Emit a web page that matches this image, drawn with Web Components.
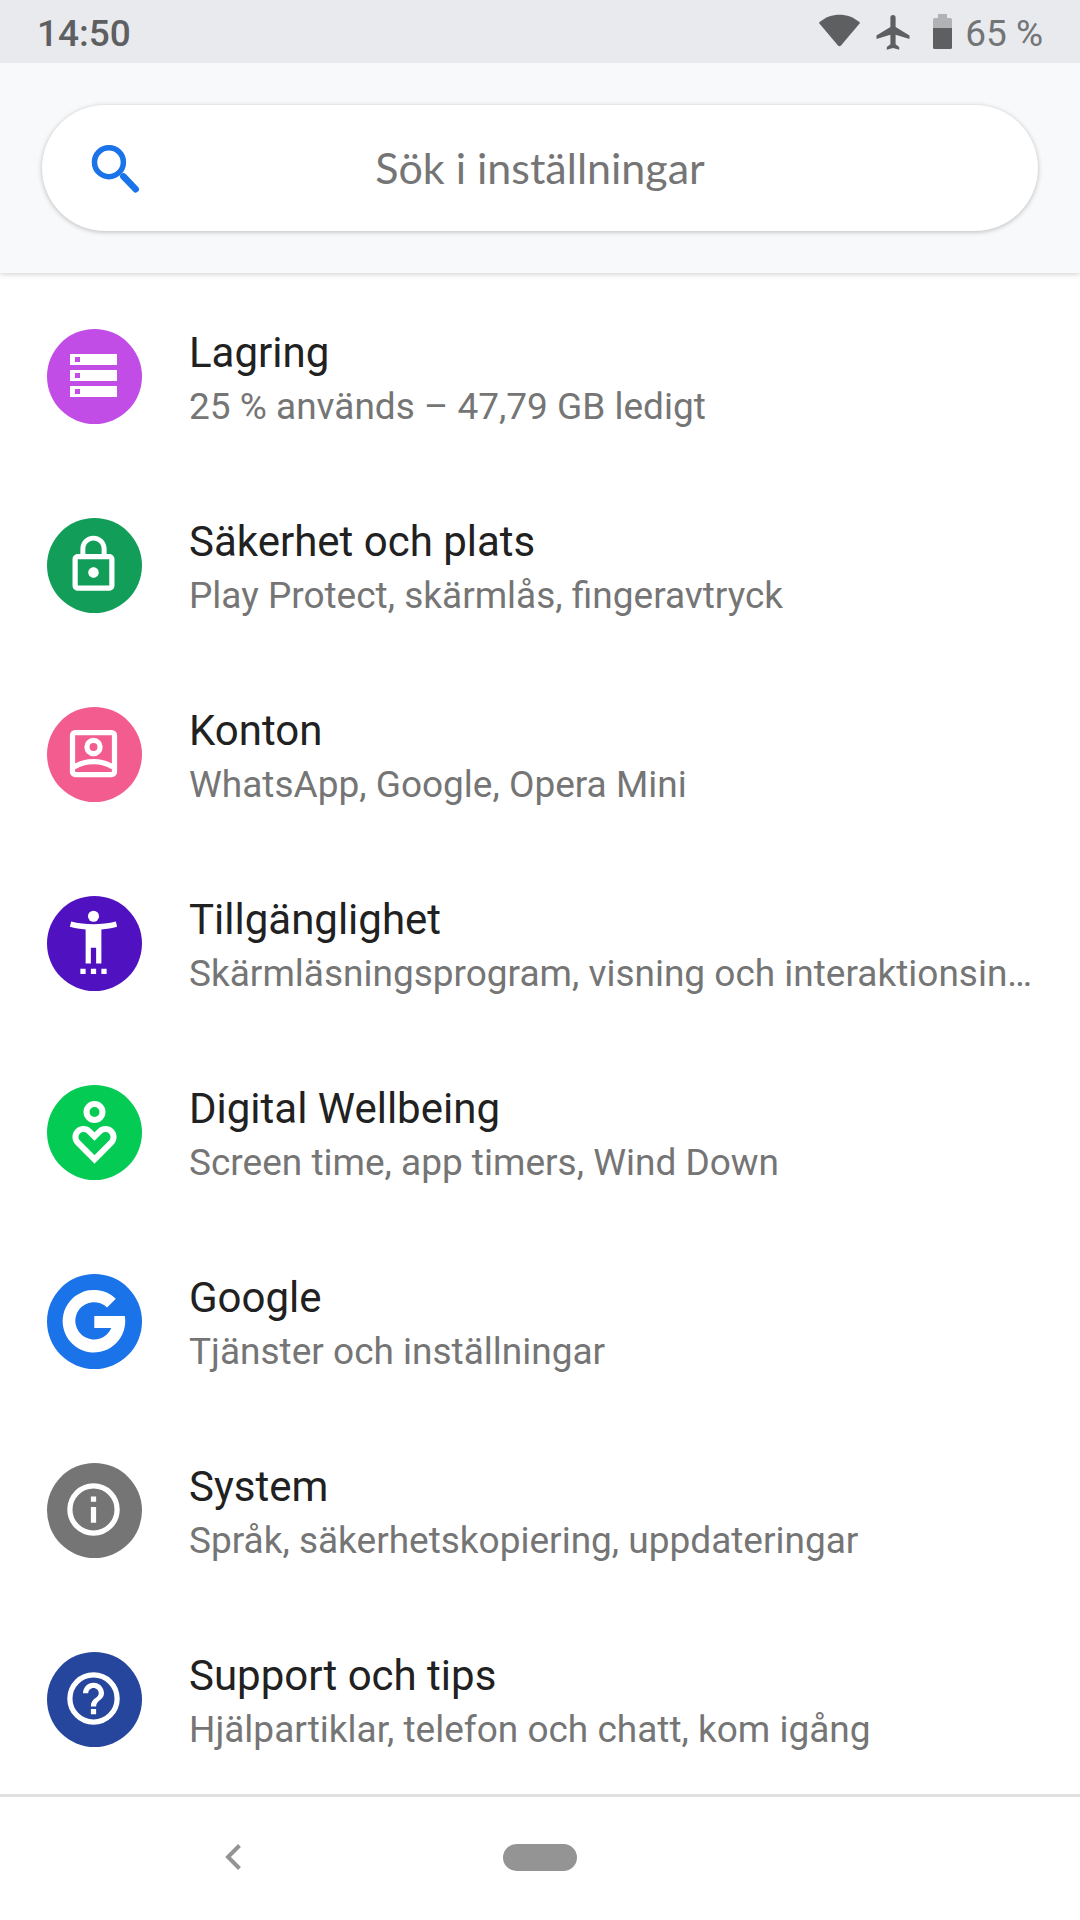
<!DOCTYPE html>
<html lang="sv">
<head>
<meta charset="utf-8">
<meta name="viewport" content="width=device-width, initial-scale=1">
<title>Inställningar</title>
<style>
    body {
        margin: 0;
        background: #fff;
        color: #212121;
        font-family: Roboto, "Noto Sans", sans-serif;
    }
</style>
</head>
<body>
<settings-app>
    <status-bar slot="status" time="14:50" battery="65"></status-bar>
    <search-header slot="header" placeholder="Sök i inställningar"></search-header>

    <settings-item icon="storage" color="#c14ce6">
        Lagring
        <span slot="summary">25 % används – 47,79 GB ledigt</span>
    </settings-item>
    <settings-item icon="lock" color="#129e59">
        Säkerhet och plats
        <span slot="summary">Play Protect, skärmlås, fingeravtryck</span>
    </settings-item>
    <settings-item icon="account" color="#f25c8f">
        Konton
        <span slot="summary">WhatsApp, Google, Opera Mini</span>
    </settings-item>
    <settings-item icon="accessibility" color="#5011c1">
        Tillgänglighet
        <span slot="summary">Skärmläsningsprogram, visning och interaktionsin…</span>
    </settings-item>
    <settings-item icon="wellbeing" color="#04cb54">
        Digital Wellbeing
        <span slot="summary">Screen time, app timers, Wind Down</span>
    </settings-item>
    <settings-item icon="google" color="#1a73e8">
        Google
        <span slot="summary">Tjänster och inställningar</span>
    </settings-item>
    <settings-item icon="info" color="#757575">
        System
        <span slot="summary">Språk, säkerhetskopiering, uppdateringar</span>
    </settings-item>
    <settings-item icon="help" color="#26459c">
        Support och tips
        <span slot="summary">Hjälpartiklar, telefon och chatt, kom igång</span>
    </settings-item>

    <nav-bar slot="nav"></nav-bar>
</settings-app>

<script>
// 24-unit glyphs, placed inside the 95px icon circle
const glyph = (shapes) => `<g transform="translate(15 15) scale(2.625)">${shapes}</g>`;

const ICONS = {
    storage: `
        <path fill-rule="evenodd" d="M23 25h47v11H23zM28 28v5h5v-5zM23 41h47v11H23zM28 44v5h5v-5zM23 57h47v11H23zM28 60v5h5v-5z"/>`,
    lock: glyph(`
        <path d="M12 17c1.1 0 2-.9 2-2s-.9-2-2-2-2 .9-2 2 .9 2 2 2zm6-9h-1V6c0-2.76-2.24-5-5-5S7 3.24 7 6v2H6c-1.1 0-2 .9-2 2v10c0 1.1.9 2 2 2h12c1.1 0 2-.9 2-2V10c0-1.1-.9-2-2-2zM8.9 6c0-1.71 1.39-3.1 3.1-3.1s3.1 1.39 3.1 3.1v2H8.9V6zM18 20H6V10h12v10z"/>`),
    account: glyph(`
        <g fill="none" stroke="#fff" stroke-width="2">
            <rect x="4" y="4" width="16" height="16" rx="1"/>
            <circle cx="12" cy="9.5" r="2.5"/>
            <path d="M4.6 17.2C6.8 15.8 9.3 15.1 12 15.1s5.2.7 7.4 2.1"/>
        </g>`),
    accessibility: glyph(`
        <circle cx="12" cy="2" r="2.1"/>
        <path d="M20.5 4c-2.61.7-5.67 1-8.5 1s-5.89-.3-8.5-1L3 6c1.86.5 4 .83 6 1v13h2v-6h2v6h2V7c2-.17 4.14-.5 6-1zM7 22h2v2H7zM11 22h2v2h-2zM15 22h2v2h-2z"/>`),
    wellbeing: `
        <g fill="none" stroke="#fff" stroke-width="6">
            <circle cx="47.5" cy="27" r="8"/>
            <path d="M47.5 74.4 30.8 57.7a8 8 0 0 1 11.4-11.4l5.3 5.3 5.3-5.3a8 8 0 0 1 11.4 11.4z"/>
        </g>`,
    google: `
        <path d="M68.8 24.8 60.1 33.5A18.7 18.7 0 1 0 64.3 54H47.3V42H77.8A31.3 31.3 0 1 1 68.8 24.8z"/>`,
    info: glyph(`
        <circle cx="12" cy="12" r="9" fill="none" stroke="#fff" stroke-width="2"/>
        <path d="M11 7h2v2h-2zM11 11h2v6h-2z"/>`),
    help: glyph(`
        <circle cx="12" cy="12" r="9" fill="none" stroke="#fff" stroke-width="2"/>
        <path d="M11 16h2v2h-2zM12 6c-2.21 0-4 1.79-4 4h2c0-1.1.9-2 2-2s2 .9 2 2c0 2-3 1.75-3 5h2c0-2.25 3-2.5 3-5 0-2.21-1.79-4-4-4z"/>`)
};

class SettingsApp extends HTMLElement {
    constructor() {
        super();
        this.attachShadow({ mode: "open" });
        this.shadowRoot.innerHTML = `
            <style>
                :host {
                    display: flex;
                    flex-direction: column;
                    min-height: 100vh;
                }

                main {
                    flex: 1;
                    padding-top: 9px;
                }
            </style>

            <slot name="status"></slot>
            <slot name="header"></slot>
            <main><slot></slot></main>
            <slot name="nav"></slot>
        `;
    }
}

class StatusBar extends HTMLElement {
    constructor() {
        super();
        this.attachShadow({ mode: "open" });
    }

    connectedCallback() {
        this.shadowRoot.innerHTML = `
            <style>
                /* stays above the header's shadow */
                :host {
                    position: relative;
                    z-index: 1;
                    display: flex;
                    align-items: center;
                    justify-content: space-between;
                    height: 63px;
                    padding: 0 37px;
                    background: #e8eaed;
                    color: #5e5f61;
                    font-size: 37px;
                    line-height: 63px;
                }

                time {
                    padding-top: 3px;
                    font-weight: 500;
                }

                .icons {
                    display: flex;
                    align-items: center;
                }

                svg {
                    display: block;
                    fill: #5e5f61;
                }

                .wifi { margin-right: 16px; }
                .plane { margin-right: 23px; }
                .battery { margin-right: 13px; }

                .level {
                    padding-top: 3px;
                    color: #737476;
                }
            </style>

            <time>${this.getAttribute("time")}</time>
            <div class="icons">
                <svg class="wifi" width="41" height="35" viewBox="0 0 41 35" role="img" aria-label="Wi-Fi">
                    <path d="M.6 8C12-1.8 29-1.8 40.4 8c.5.5.6 1 .2 1.5L22 31.4c-.9 1-2.1 1-3 0L.4 9.5C0 9 .1 8.5.6 8z"/>
                </svg>
                <svg class="plane" width="34" height="36" viewBox="0 0 34 36" role="img" aria-label="Flygplansläge">
                    <path d="M33.5 25v-3.5L19.6 13V3.5a2.6 2.6 0 0 0-5.2 0V13L.5 21.5V25l13.9-4.3v9.5L10.8 33v2.7L17 34l6.2 1.7V33l-3.6-2.8v-9.5z"/>
                </svg>
                <svg class="battery" width="19" height="35" viewBox="0 0 19 35" role="img" aria-label="Batteri">
                    <path fill="#b1b2b4" d="M5 0h9v4h3.5q1.5 0 1.5 1.5V14H0V5.5Q0 4 1.5 4H5z"/>
                    <path d="M0 14h19v19.5q0 1.5-1.5 1.5h-16Q0 35 0 33.5z"/>
                </svg>
                <span class="level">${this.getAttribute("battery")} %</span>
            </div>
        `;
    }
}

class SearchHeader extends HTMLElement {
    constructor() {
        super();
        this.attachShadow({ mode: "open" });
    }

    connectedCallback() {
        const text = this.getAttribute("placeholder");
        this.shadowRoot.innerHTML = `
            <style>
                :host {
                    display: block;
                    padding: 42px;
                    background: #f8f9fb;
                    box-shadow: 0 1px 6px rgba(0, 0, 0, 0.2);
                }

                label {
                    display: flex;
                    align-items: center;
                    height: 126px;
                    padding: 0 42px;
                    box-sizing: border-box;
                    border-radius: 63px;
                    background: #fff;
                    box-shadow: 0 1px 5px rgba(0, 0, 0, 0.25);
                }

                svg {
                    flex: none;
                    margin-right: -63px;
                }

                input {
                    flex: 1;
                    min-width: 0;
                    padding: 0 63px;
                    border: 0;
                    outline: 0;
                    background: none;
                    color: #212121;
                    font-family: Lato, Roboto, sans-serif;
                    font-size: 43px;
                    line-height: 56px;
                    text-align: center;
                }

                input::placeholder {
                    color: #757575;
                    opacity: 1;
                }
            </style>

            <label>
                <svg width="63" height="63" viewBox="0 0 24 24" fill="none" stroke="#1a73e8" aria-hidden="true">
                    <circle cx="9.5" cy="9.6" r="5.5" stroke-width="2.1"/>
                    <path stroke-width="2.5" stroke-linecap="round" d="M15 15l4.7 4.9"/>
                </svg>
                <input type="text" placeholder="${text}" aria-label="${text}">
            </label>
        `;
    }
}

class SettingsItem extends HTMLElement {
    constructor() {
        super();
        this.attachShadow({ mode: "open" });
    }

    connectedCallback() {
        this.shadowRoot.innerHTML = `
            <style>
                :host {
                    display: block;
                }

                a {
                    display: flex;
                    align-items: center;
                    gap: 47px;
                    height: 189px;
                    padding: 0 42px 0 47px;
                    box-sizing: border-box;
                    color: inherit;
                    text-decoration: none;
                }

                svg {
                    flex: none;
                    border-radius: 50%;
                    background: ${this.getAttribute("color")};
                    fill: #fff;
                }

                .text {
                    flex: 1;
                    min-width: 0;
                }

                .title, .summary {
                    overflow: hidden;
                    white-space: nowrap;
                    text-overflow: ellipsis;
                }

                .title {
                    font-size: 42px;
                    line-height: 60px;
                }

                .summary {
                    color: #757575;
                    font-size: 37px;
                    line-height: 48px;
                }
            </style>

            <a href="#${this.getAttribute("icon")}">
                <svg width="95" height="95" viewBox="0 0 95 95" aria-hidden="true">${ICONS[this.getAttribute("icon")]}</svg>
                <div class="text">
                    <div class="title"><slot></slot></div>
                    <div class="summary"><slot name="summary"></slot></div>
                </div>
            </a>
        `;
    }
}

class NavBar extends HTMLElement {
    constructor() {
        super();
        this.attachShadow({ mode: "open" });
        this.shadowRoot.innerHTML = `
            <style>
                :host {
                    display: grid;
                    grid-template-columns: repeat(3, 1fr);
                    height: 126px;
                    padding: 0 80px;
                    background: #fff;
                    box-shadow: inset 0 3px #e0e0e0;
                }

                button {
                    display: flex;
                    align-items: center;
                    justify-content: center;
                    padding: 0;
                    border: 0;
                    background: none;
                }

                .pill {
                    width: 74px;
                    height: 27px;
                    border-radius: 14px;
                    background: #949494;
                }
            </style>

            <button type="button" aria-label="Tillbaka">
                <svg width="16" height="26" viewBox="0 0 16 26" fill="none" stroke="#949494" stroke-width="4">
                    <path d="M14.5 1.5 3 13l11.5 11.5"/>
                </svg>
            </button>
            <button type="button" aria-label="Startsida"><span class="pill"></span></button>
        `;
    }
}

customElements.define("settings-app", SettingsApp);
customElements.define("status-bar", StatusBar);
customElements.define("search-header", SearchHeader);
customElements.define("settings-item", SettingsItem);
customElements.define("nav-bar", NavBar);
</script>
</body>
</html>
